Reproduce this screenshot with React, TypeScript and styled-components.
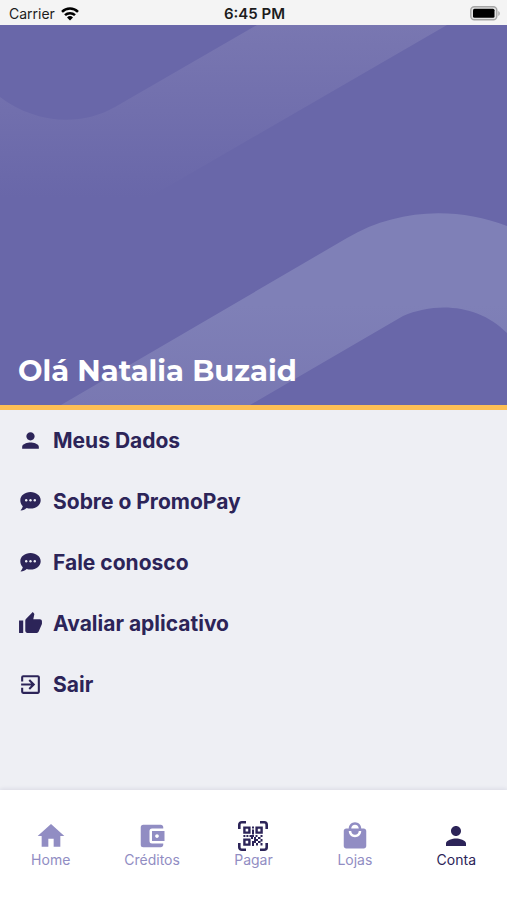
import React from "react";
import styled, { createGlobalStyle } from "styled-components";
import {
  MdAccountBalanceWallet,
  MdExitToApp,
  MdHome,
  MdLocalMall,
  MdPerson,
  MdThumbUp,
} from "react-icons/md";

const color = {
  ink: "#2c2458",
  lilac: "#918dc3",
  purple: "#6967a9",
  amber: "#fdbf55",
  page: "#eeeff4",
};

const GlobalStyle = createGlobalStyle`
  *, *::before, *::after { box-sizing: border-box; }
  body {
    margin: 0;
    background: ${color.page};
    color: ${color.ink};
    font-family: Inter, "Liberation Sans", sans-serif;
  }
`;

const Screen = styled.div`
  display: flex;
  flex-direction: column;
  min-height: 100vh;
`;

const StatusBar = styled.div`
  display: grid;
  grid-template-columns: 1fr auto 1fr;
  align-items: center;
  height: 25px;
  padding: 2px 7px 0 9px;
  background: #f4f4f4;
  color: #1c1c1c;
  font-size: 14px;
  line-height: 20px;
`;

const Carrier = styled.span`
  display: flex;
  align-items: center;
  gap: 6px;
`;

const Clock = styled.time`
  font-size: 15px;
  font-weight: 600;
`;

const Battery = styled.svg`
  justify-self: end;
`;

const Hero = styled.header`
  display: grid;
  height: 385px;
  border-bottom: 5px solid ${color.amber};
  background: ${color.purple};
  overflow: hidden;

  > * {
    grid-area: 1 / 1;
  }
`;

const Waves = styled.svg`
  width: 100%;
  height: 380px;
`;

const Greeting = styled.h1`
  align-self: end;
  margin: 0;
  padding: 0 18px 16px;
  color: #fff;
  font-family: Montserrat, Inter, sans-serif;
  font-size: 29px;
  font-weight: 700;
  line-height: 36px;
`;

const Menu = styled.ul`
  flex: 1;
  margin: 0;
  padding: 0;
  list-style: none;
`;

const MenuButton = styled.button`
  display: flex;
  align-items: center;
  gap: 10px;
  width: 100%;
  height: 61px;
  padding: 0 18px;
  border: 0;
  background: none;
  color: inherit;
  font: 700 21px/28px Inter, "Liberation Sans", sans-serif;
  text-align: left;
  cursor: pointer;
`;

const MenuIcon = styled.span`
  display: flex;
  justify-content: center;
  width: 25px;
`;

const TabBar = styled.nav`
  display: grid;
  grid-template-columns: repeat(5, 1fr);
  height: 110px;
  padding-top: 30px;
  background: #fff;
  box-shadow: 0 -1px 4px rgba(44, 36, 88, 0.1);
`;

const Tab = styled.a<{ $active?: boolean }>`
  display: flex;
  flex-direction: column;
  align-items: center;
  color: ${(p) => (p.$active ? color.ink : color.lilac)};
  font-size: 14px;
  line-height: 16px;
  text-decoration: none;
`;

const TabIcon = styled.span`
  display: flex;
  align-items: center;
  height: 32px;
`;

const WifiIcon = () => (
  <svg width="18" height="14" viewBox="0 0 18 14" aria-hidden="true">
    <g fill="none" stroke="#000" strokeWidth="2.5">
      <path d="M1 4.9a11.4 11.4 0 0 1 16 0" />
      <path d="M4 8.2a7.2 7.2 0 0 1 10 0" />
    </g>
    <path d="M9 13.6 6 10.5a4.3 4.3 0 0 1 6 0z" />
  </svg>
);

const BatteryIcon = () => (
  <Battery width="30" height="15" viewBox="0 0 30 15" aria-label="Battery full">
    <rect x="0.8" y="0.8" width="26" height="13" rx="3.5" fill="#e4e4e4" stroke="#a5a5a5" strokeWidth="1.4" />
    <rect x="3" y="2.8" width="21.5" height="9" rx="1.5" />
    <path d="M28.3 5v5c1.9-1 1.9-4 0-5z" fill="#a5a5a5" />
  </Battery>
);

const ChatIcon = () => (
  <svg width="21" height="19" viewBox="0 0 21 19" aria-hidden="true">
    <path
      fill="currentColor"
      d="M10.500 0C16.200 0 20.700 3.600 20.700 8.300s-4.500 8.300-10.200 8.300c-1.300 0-2.600-.2-3.800-.6C5.200 17.300 3 18.600 1 18.600c-.4 0-.5-.4-.2-.7 1-1.100 1.700-2.300 2-3.700C1.200 12.600.3 10.600.3 8.300.3 3.600 4.800 0 10.500 0z"
    />
    <g fill={color.page}>
      <circle cx="6.200" cy="8.200" r="1.200" />
      <circle cx="10.500" cy="8.200" r="1.200" />
      <circle cx="14.800" cy="8.200" r="1.200" />
    </g>
  </svg>
);

const QrIcon = () => (
  <svg width="30" height="30" viewBox="0 0 30 30" aria-hidden="true">
    <g fill="none" stroke={color.ink}>
      <path
        strokeWidth="2.6"
        d="M1.3 8V3.8a2.5 2.5 0 0 1 2.5-2.5H8M22 1.3h4.2a2.5 2.5 0 0 1 2.5 2.5V8M28.7 22v4.2a2.5 2.5 0 0 1-2.5 2.5H22M8 28.7H3.8a2.5 2.5 0 0 1-2.5-2.5V22"
      />
      <path strokeWidth="2.4" d="M6.4 6.6h5v5h-5zM18.6 6.6h5v5h-5zM6.4 18.6h5v5h-5z" />
    </g>
    <path
      fill={color.ink}
      d="M14 5.5h2v2h-2zM14 8.5h2v5h-2zM5.4 14h2v2h-2zM8.4 14h2v2h-2zM11.5 14h4.5v2h-1v2h-2v-2h-1.5zM17.5 14h2v2h-2zM22.5 14h2v2h-2zM16 16h2v2h2v2h-2v2h-2v3h-2v-5h2zM20 16h2.5v2H20zM22.5 18h2v2.5h-2zM20 20h2.5v2H20zM18 22h2v2.6h-2zM22.5 22h2v2.6h-2z"
    />
  </svg>
);

const HeroWaves = () => (
  <Waves viewBox="0 0 507 380" preserveAspectRatio="xMidYMid slice" aria-hidden="true">
    <defs>
      <linearGradient id="upper" gradientUnits="userSpaceOnUse" x1="0" y1="0" x2="0" y2="172">
        <stop offset="0" stopColor="#7977b1" />
        <stop offset="1" stopColor={color.purple} />
      </linearGradient>
      <linearGradient id="lower" gradientUnits="userSpaceOnUse" x1="0" y1="280" x2="0" y2="380">
        <stop offset="0" stopColor="#7f80b7" />
        <stop offset="1" stopColor="#7978b2" />
      </linearGradient>
    </defs>
    <path fill="url(#upper)" d="M257 0 115 82C78 103 33 97 0 72v100h150L447 0z" />
    <path
      fill="url(#lower)"
      d="M61 380 347 213C396 184 455 181 507 201V308C480 280 437 276 403 291L250 380z"
    />
  </Waves>
);

const menu = [
  { label: "Meus Dados", icon: <MdPerson size={25} /> },
  { label: "Sobre o PromoPay", icon: <ChatIcon /> },
  { label: "Fale conosco", icon: <ChatIcon /> },
  { label: "Avaliar aplicativo", icon: <MdThumbUp size={25} /> },
  { label: "Sair", icon: <MdExitToApp size={25} /> },
];

const tabs = [
  { label: "Home", icon: <MdHome size={32} /> },
  { label: "Créditos", icon: <MdAccountBalanceWallet size={30} /> },
  { label: "Pagar", icon: <QrIcon /> },
  { label: "Lojas", icon: <MdLocalMall size={30} /> },
  { label: "Conta", icon: <MdPerson size={30} />, active: true },
];

export default function App() {
  return (
    <Screen>
      <GlobalStyle />
      <StatusBar>
        <Carrier>
          Carrier
          <WifiIcon />
        </Carrier>
        <Clock>6:45 PM</Clock>
        <BatteryIcon />
      </StatusBar>
      <Hero>
        <HeroWaves />
        <Greeting>Olá Natalia Buzaid</Greeting>
      </Hero>
      <Menu>
        {menu.map((item) => (
          <li key={item.label}>
            <MenuButton type="button">
              <MenuIcon>{item.icon}</MenuIcon>
              {item.label}
            </MenuButton>
          </li>
        ))}
      </Menu>
      <TabBar>
        {tabs.map((tab) => (
          <Tab
            key={tab.label}
            href={`#${tab.label.toLowerCase()}`}
            $active={tab.active}
            aria-current={tab.active ? "page" : undefined}
          >
            <TabIcon>{tab.icon}</TabIcon>
            {tab.label}
          </Tab>
        ))}
      </TabBar>
    </Screen>
  );
}
